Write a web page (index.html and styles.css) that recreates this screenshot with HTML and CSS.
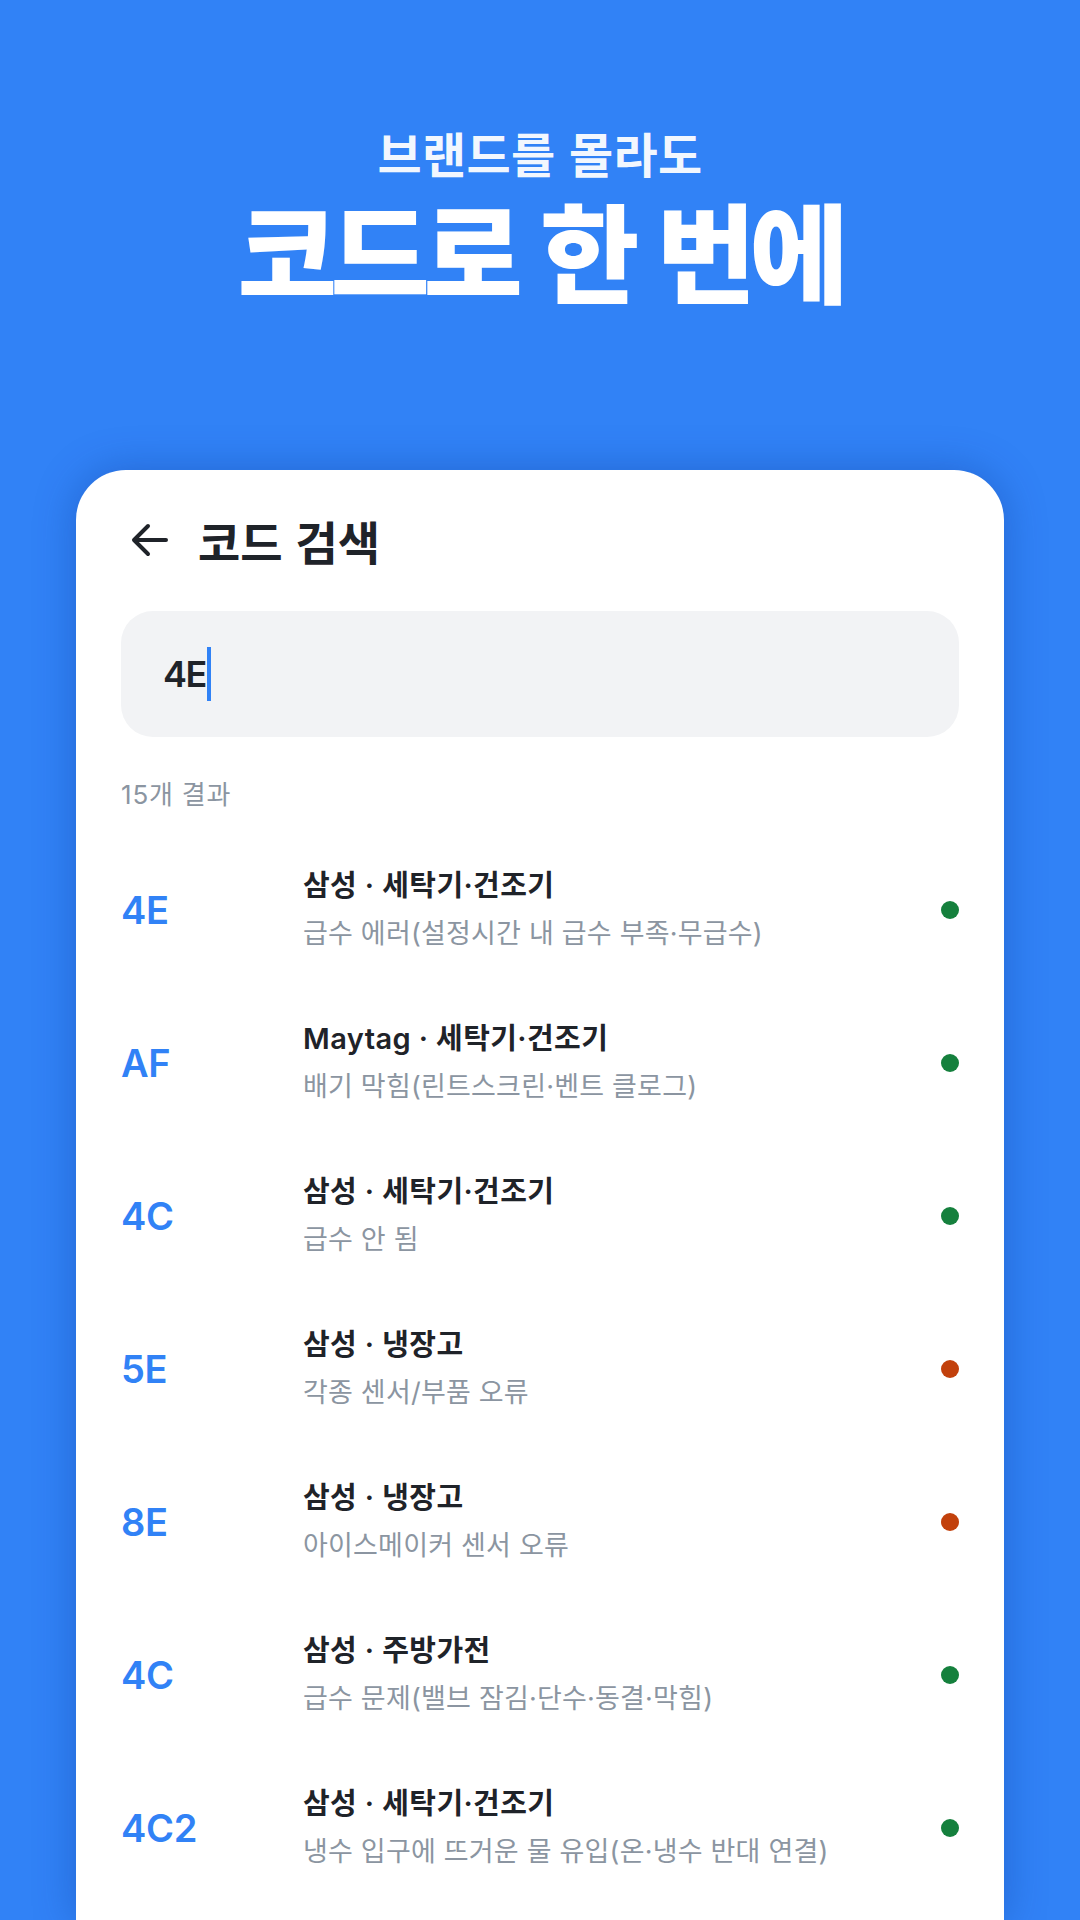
FILE: index.html
```html
<!DOCTYPE html>
<html lang="ko">
<head>
<meta charset="utf-8">
<link rel="stylesheet" href="styles.css">
</head>
<body>
<div class="screen">
  <header class="hero">
    <p class="hero-sub">브랜드를 몰라도</p>
    <h1 class="hero-title">코드로 한 번에</h1>
  </header>
  <section class="card">
    <div class="topbar">
      <svg class="back" viewBox="0 0 40 40" width="40" height="40" aria-hidden="true">
        <path d="M36 20H5M18 6L4 20l14 14" fill="none" stroke="#1f2329" stroke-width="4" stroke-linecap="round" stroke-linejoin="round"/>
      </svg>
      <h2 class="topbar-title">코드 검색</h2>
    </div>
    <div class="search">
      <span class="search-value">4E</span><span class="caret"></span>
    </div>
    <p class="count">15개 결과</p>
    <ul class="list">
      <li class="row"><span class="code">4E</span><div class="info"><p class="info-title">삼성 · 세탁기·건조기</p><p class="info-desc">급수 에러(설정시간 내 급수 부족·무급수)</p></div><span class="dot ok"></span></li>
      <li class="row"><span class="code">AF</span><div class="info"><p class="info-title">Maytag · 세탁기·건조기</p><p class="info-desc">배기 막힘(린트스크린·벤트 클로그)</p></div><span class="dot ok"></span></li>
      <li class="row"><span class="code">4C</span><div class="info"><p class="info-title">삼성 · 세탁기·건조기</p><p class="info-desc">급수 안 됨</p></div><span class="dot ok"></span></li>
      <li class="row"><span class="code">5E</span><div class="info"><p class="info-title">삼성 · 냉장고</p><p class="info-desc">각종 센서/부품 오류</p></div><span class="dot warn"></span></li>
      <li class="row"><span class="code">8E</span><div class="info"><p class="info-title">삼성 · 냉장고</p><p class="info-desc">아이스메이커 센서 오류</p></div><span class="dot warn"></span></li>
      <li class="row"><span class="code">4C</span><div class="info"><p class="info-title">삼성 · 주방가전</p><p class="info-desc">급수 문제(밸브 잠김·단수·동결·막힘)</p></div><span class="dot ok"></span></li>
      <li class="row"><span class="code">4C2</span><div class="info"><p class="info-title">삼성 · 세탁기·건조기</p><p class="info-desc">냉수 입구에 뜨거운 물 유입(온·냉수 반대 연결)</p></div><span class="dot ok"></span></li>
    </ul>
  </section>
</div>
</body>
</html>
```

FILE: styles.css
```css
* { box-sizing: border-box; }
html, body { margin: 0; padding: 0; }
body {
  background: #3182f6;
  font-family: Inter, "Noto Sans CJK KR", sans-serif;
  color: #1f2329;
}
.screen {
  width: 1080px;
  height: 1920px;
  overflow: hidden;
  display: flex;
  flex-direction: column;
}
.hero {
  padding-top: 122px;
  text-align: center;
  color: #fff;
}
.hero-sub {
  margin: 0;
  font-family: "Noto Sans CJK KR", sans-serif;
  font-size: 48px;
  line-height: 60px;
  font-weight: 600;
  letter-spacing: 0.3px;
  color: rgba(255,255,255,0.94);
}
.hero-title {
  margin: 4px 0 0;
  font-family: "Noto Sans CJK KR", sans-serif;
  font-size: 108px;
  line-height: 124px;
  font-weight: 900;
  letter-spacing: -6.5px;
}
.card {
  margin: 160px 76px 0;
  flex: 1;
  background: #fff;
  border-radius: 50px 50px 0 0;
  padding: 40px 45px 0;
  box-shadow: 0 0 40px rgba(10, 50, 140, 0.35);
}
.topbar {
  display: flex;
  align-items: center;
  height: 60px;
}
.back {
  margin-left: 9px;
  flex: none;
}
.topbar-title {
  margin: 0 0 0 28px;
  font-family: "Noto Sans CJK KR", sans-serif;
  font-size: 46px;
  line-height: 60px;
  font-weight: 700;
  letter-spacing: 0;
}
.search {
  margin-top: 41px;
  height: 126px;
  background: #f2f3f5;
  border-radius: 32px;
  padding-left: 42px;
  display: flex;
  align-items: center;
}
.search-value {
  font-size: 36px;
  font-weight: 600;
  letter-spacing: -1.5px;
  color: #1f2329;
}
.caret {
  width: 4px;
  height: 54px;
  background: #3182f6;
  margin-left: 1px;
}
.count {
  margin: 40px 0 0;
  font-size: 26px;
  line-height: 36px;
  color: #8b95a1;
  letter-spacing: 0.8px;
}
.list {
  list-style: none;
  margin: 20px 0 0;
  padding: 0;
}
.row {
  height: 153px;
  display: flex;
  align-items: center;
}
.code {
  width: 182px;
  flex: none;
  font-size: 38px;
  font-weight: 600;
  color: #3182f6;
  letter-spacing: -0.3px;
}
.info {
  flex: 1;
  display: flex;
  flex-direction: column;
  gap: 4px;
}
.info p { margin: 0; }
.info-title {
  font-size: 29px;
  line-height: 44px;
  font-weight: 600;
  letter-spacing: 0.4px;
  color: #1f2329;
}
.info-desc {
  font-size: 27px;
  line-height: 44px;
  color: #8b95a1;
  letter-spacing: 0.2px;
}
.dot {
  width: 18px;
  height: 18px;
  border-radius: 50%;
  flex: none;
}
.dot.ok { background: #15803d; }
.dot.warn { background: #c2410c; }
```
